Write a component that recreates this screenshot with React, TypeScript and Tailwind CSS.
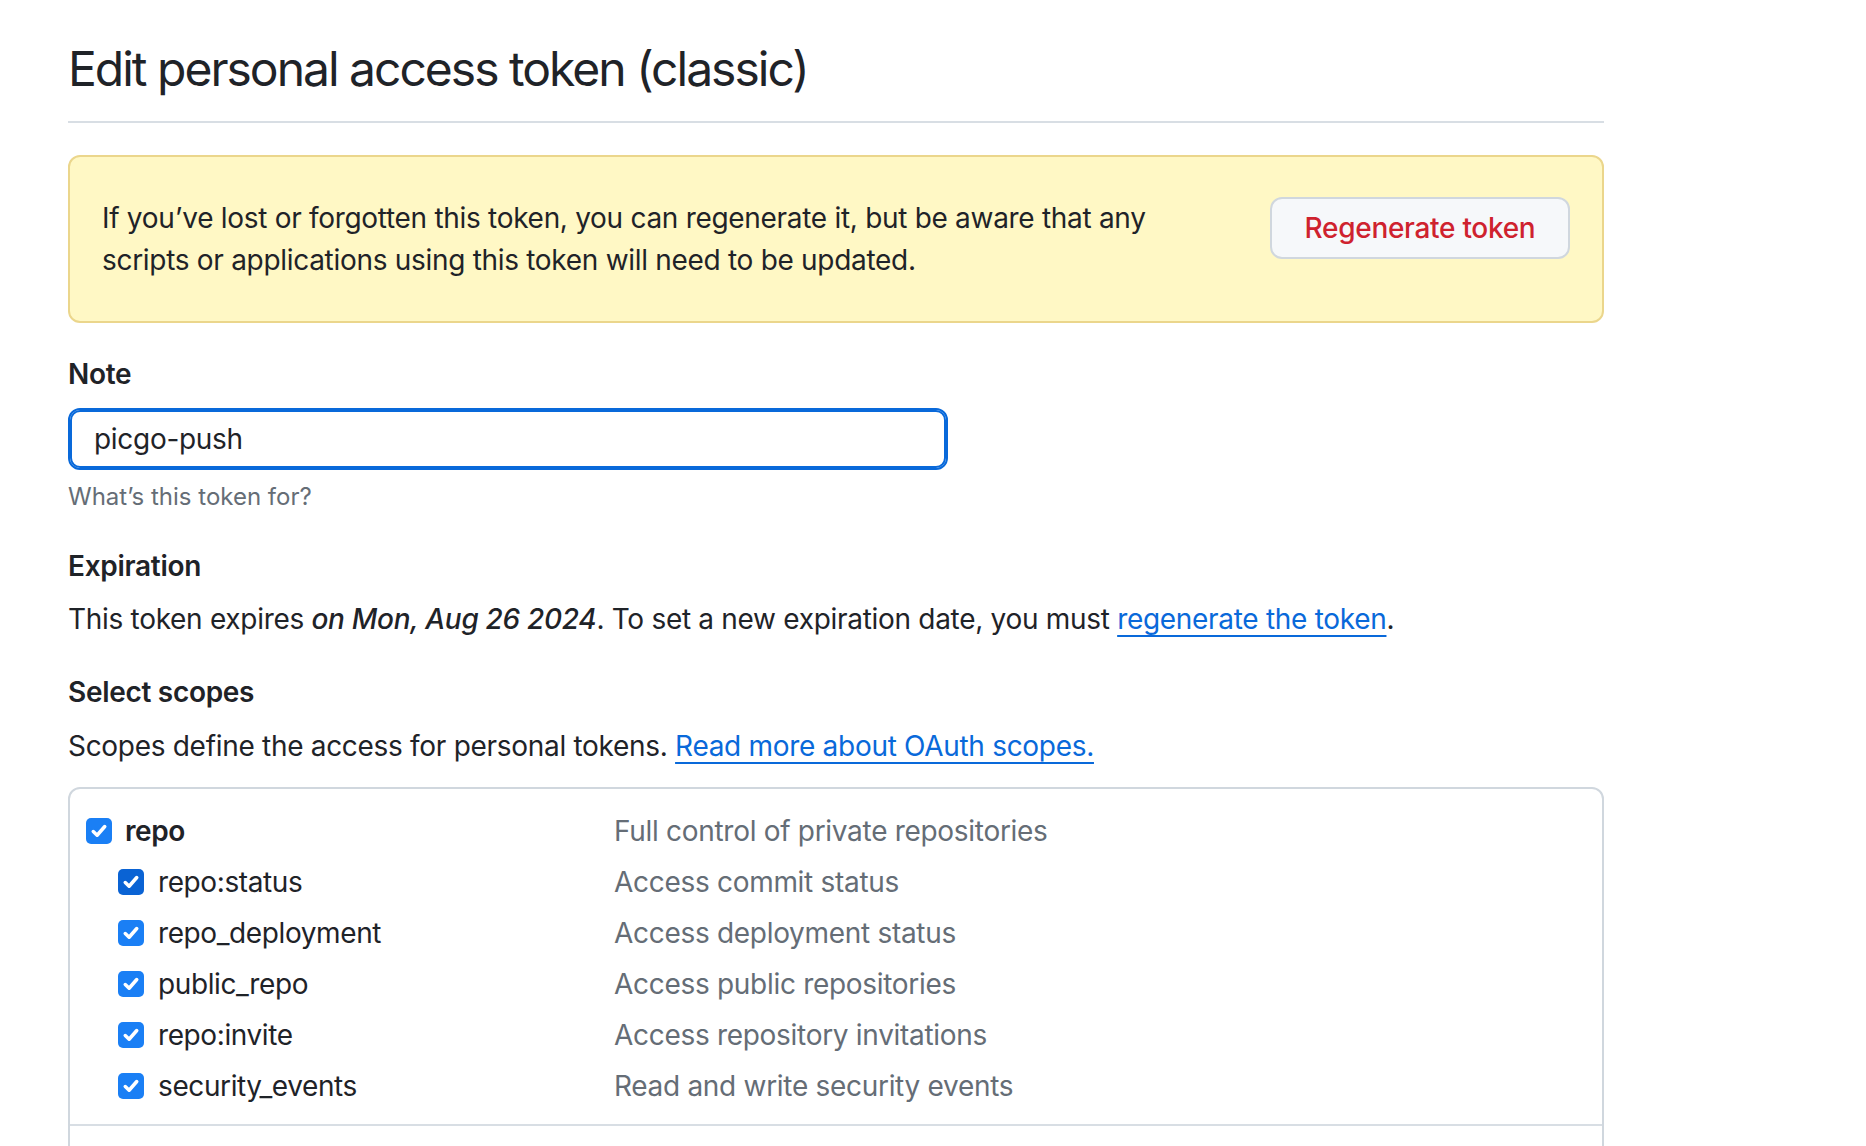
import React from 'react';

const font = { fontFamily: 'Inter, "Noto Sans", sans-serif' };

const CheckBox = ({ dark }: { dark?: boolean }) => (
  <span
    className={
      'flex h-[26px] w-[26px] shrink-0 items-center justify-center rounded-[5px] ' +
      (dark ? 'bg-[#0a63d4]' : 'bg-[#1a7ff5]')
    }
  >
    <svg viewBox="0 0 16 16" className="h-[20px] w-[20px]" fill="none">
      <path d="M3.4 8.4 6.5 11.4 12.6 4.4" stroke="white" strokeWidth="2.8" strokeLinecap="round" strokeLinejoin="round" />
    </svg>
  </span>
);

interface Scope {
  name: string;
  desc: string;
  parent?: boolean;
  dark?: boolean;
}

const repoScopes: Scope[] = [
  { name: 'repo', desc: 'Full control of private repositories', parent: true },
  { name: 'repo:status', desc: 'Access commit status', dark: true },
  { name: 'repo_deployment', desc: 'Access deployment status' },
  { name: 'public_repo', desc: 'Access public repositories' },
  { name: 'repo:invite', desc: 'Access repository invitations' },
  { name: 'security_events', desc: 'Read and write security events' },
];

const ScopeRow = ({ scope }: { scope: Scope }) => (
  <div className="grid h-[51px] grid-cols-[544px_1fr] items-center">
    <div className={'flex items-center ' + (scope.parent ? 'gap-[13px] pl-[16px]' : 'gap-[14px] pl-[48px]')}>
      <CheckBox dark={scope.dark} />
      <span
        className={
          'text-[28px] leading-[42px] tracking-[-0.4px] text-[#1f2328] ' + (scope.parent ? 'font-semibold' : '')
        }
      >
        {scope.name}
      </span>
    </div>
    <span className="text-[28px] leading-[42px] tracking-[-0.3px] text-[#656d76]">{scope.desc}</span>
  </div>
);

export default function App() {
  return (
    <div className="h-[1146px] overflow-hidden bg-white text-[#1f2328]" style={font}>
      <div className="ml-[68px] w-[1536px] pt-[33px]">
        {/* Header */}
        <div className="border-b-2 border-[#d8dee4] pb-[16px]">
          <h1 className="text-[48px] font-normal leading-[72px] tracking-[-2px]">Edit personal access token (classic)</h1>
        </div>

        {/* Warning flash */}
        <div className="mt-[32px] flex items-start justify-between rounded-[12px] border-2 border-[#ebd68c] bg-[#fff8c5] px-[32px] py-[40px]">
          <p className="text-[28px] leading-[42px] tracking-[-0.3px]">
            If you’ve lost or forgotten this token, you can regenerate it, but be aware that any
            <br />
            scripts or applications using this token will need to be updated.
          </p>
          <button className="h-[62px] w-[300px] shrink-0 rounded-[12px] border-2 border-[#d0d7de] bg-[#f6f8fa] text-[28px] font-medium tracking-[-0.3px] text-[#cf222e]">
            Regenerate token
          </button>
        </div>

        {/* Note */}
        <div className="mt-[30px]">
          <label className="block text-[28px] font-semibold leading-[42px] tracking-[-0.3px]">Note</label>
          <div className="mt-[13px] flex h-[62px] w-[880px] items-center rounded-[12px] border-2 border-[#0969da] pl-[24px] shadow-[inset_0_0_0_2px_#0969da]">
            <span className="text-[28px] tracking-[-0.3px] text-[#1f2328]">picgo-push</span>
          </div>
          <p className="mt-[9px] text-[24px] leading-[36px] text-[#656d76]">What’s this token for?</p>
        </div>

        {/* Expiration */}
        <div className="mt-[30px]">
          <h3 className="text-[28px] font-semibold leading-[42px] tracking-[-0.3px]">Expiration</h3>
          <p className="mt-[11px] text-[28px] leading-[42px] tracking-[-0.3px]">
            This token expires <em className="font-medium">on Mon, Aug 26 2024</em>. To set a new expiration date, you
            must{' '}
            <a className="text-[#0969da] underline decoration-2 underline-offset-[6px]">regenerate the token</a>.
          </p>
        </div>

        {/* Scopes */}
        <div className="mt-[31px]">
          <h3 className="text-[28px] font-semibold leading-[42px] tracking-[-0.3px]">Select scopes</h3>
          <p className="mt-[12px] text-[28px] leading-[42px] tracking-[-0.3px]">
            Scopes define the access for personal tokens.{' '}
            <a className="text-[#0969da] underline decoration-2 underline-offset-[6px]">Read more about OAuth scopes.</a>
          </p>
          <div className="mt-[20px] rounded-[12px] border-2 border-[#d0d7de]">
            <div className="pb-[13px] pt-[16px]">
              {repoScopes.map((s) => (
                <ScopeRow key={s.name} scope={s} />
              ))}
            </div>
            <div className="border-t-2 border-[#d8dee4] pb-[10px] pt-[18px]">
              <ScopeRow scope={{ name: 'workflow', desc: 'Update GitHub Action workflows', parent: true }} />
            </div>
          </div>
        </div>
      </div>
    </div>
  );
}
